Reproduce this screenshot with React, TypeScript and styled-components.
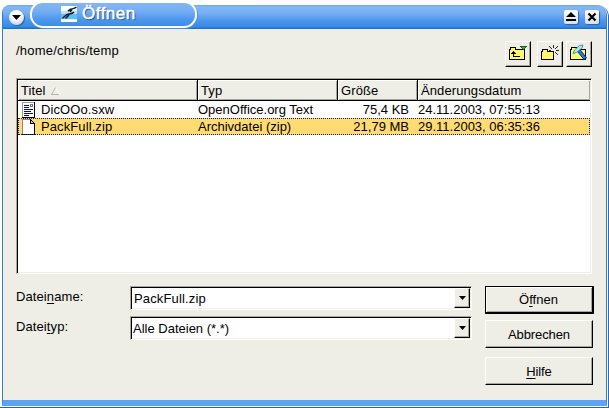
import React from 'react';
import styled, { createGlobalStyle, css } from 'styled-components';

const Global = createGlobalStyle`
  * { box-sizing: border-box; }
  body { margin: 0; background: #fff; overflow: hidden; }
  button { font: inherit; color: inherit; padding: 0; }
`;

const Desktop = styled.div`
  width: 609px;
  height: 408px;
  padding: 5px 0 0 2px;
  background: #fff;
  border-bottom: 1px solid #2c62a8;
  font: 13px/16px "Liberation Sans", Arial, sans-serif;
  color: #000;
`;

const Frame = styled.div`
  position: relative;
  width: 607px;
  height: 402px;
  display: flex;
  flex-direction: column;
  background: #fff;
  border-right: 1px solid #2e6cba;
  border-top-right-radius: 12px;
`;

const Inner = styled.main`
  width: 605px;
  height: 401px;
  display: flex;
  flex-direction: column;
  overflow: hidden;
  border-radius: 8px 11px 0 0;
  background: #eeede6;
  border-left: 1px solid #2f7fd0;
  border-right: 1px solid #2f7fd0;
  border-bottom: 6px solid #5fa3f4;
`;

const TitleBar = styled.header`
  flex: none;
  height: 24px;
  margin: 0 -1px;
  padding: 0 8px 0 7px;
  display: flex;
  align-items: center;
  background: linear-gradient(#69a7ee 0, #82b7f6 2px, #79b0f4 8px, #4b94ec 16px, #358ae9 22px, #2470c4 23px);
`;

const MenuBall = styled.button`
  width: 15px;
  height: 15px;
  border: 0;
  border-radius: 50%;
  background: radial-gradient(circle at 45% 30%, #fff 35%, #cfd5e0 75%, #a9b6ca);
  box-shadow: 1px 1px 1px #2462ac;
  display: grid;
  place-items: center;
`;

const TitleTab = styled.div`
  position: absolute;
  left: 28px;
  top: -4px;
  width: 167px;
  height: 27px;
  border: 2px solid #fff;
  border-radius: 13px;
  background: linear-gradient(#82b7f6 0, #76aef3 8px, #5098ed 16px, #3a8cea);
  display: flex;
  align-items: center;
  padding: 0 0 1px 29px;
  gap: 5px;
  box-shadow: 1px 1px 0 #4a90e4;
`;

const Title = styled.h1`
  margin: 0;
  font-size: 17px;
  line-height: 20px;
  font-weight: 400;
  letter-spacing: 0.5px;
  color: #fff;
  -webkit-text-stroke: 0.5px #fff;
  text-shadow: 1px 1px 1px #123f7a;
`;

const WindowControls = styled.div`
  margin-left: auto;
  display: flex;
  gap: 7px;
`;

const WindowButton = styled.button`
  width: 14px;
  height: 14px;
  border: 0;
  border-radius: 2px;
  background: linear-gradient(#fff, #d8dee8);
  box-shadow: 1px 1px 1px #2462ac;
  display: grid;
  place-items: center;
`;

const Toolbar = styled.div`
  display: flex;
  align-items: flex-start;
  padding: 12px 14px 0 13px;
  height: 49px;
`;

const Path = styled.div`
  flex: 1;
  margin-top: 2px;
  letter-spacing: 0.2px;
`;

const bevel = css`
  border: 1px solid;
  border-color: #fff #000 #000 #fff;
  box-shadow: inset -1px -1px 0 #a5a79d;
  background: #eeede6;
`;

const ToolButton = styled.button<{ $gap?: number }>`
  ${bevel}
  width: 26px;
  height: 26px;
  margin-left: ${(p) => p.$gap ?? 0}px;
  svg { display: block; margin: -1px; }
`;

const sunken = css`
  border: 1px solid;
  border-color: #a5a79d #fff #fff #a5a79d;
  box-shadow: inset 1px 1px 0 #000, inset -1px -1px 0 #eeede6;
  background: #fff;
  padding: 2px 1px 1px 2px;
`;

const FileList = styled.section`
  ${sunken}
  width: 576px;
  height: 196px;
  margin-left: 13px;
  padding: 1px;
`;

const columns = css`
  display: grid;
  grid-template-columns: 180px 140px 80px 1fr;
`;

const HeaderRow = styled.div`
  ${columns}
  height: 21px;
  border-bottom: 1px solid #000;
`;

const HeaderCell = styled.div<{ $last?: boolean }>`
  display: flex;
  align-items: center;
  gap: 5px;
  padding: 2px 0 0 3px;
  background: #eeede6;
  border-right: ${(p) => (p.$last ? 0 : 1)}px solid #000;
  box-shadow: inset 1px 1px 0 #fff, inset -1px -1px 0 #a5a79d;
  letter-spacing: 0.1px;
`;

const FileRow = styled.div<{ $selected?: boolean }>`
  ${columns}
  height: 17px;
  line-height: 18px;
  white-space: nowrap;
  ${(p) =>
    p.$selected &&
    css`
      background: #ffdb73;
      outline: 1px dotted #10206a;
      outline-offset: -1px;
    `}
`;

const NameCell = styled.div`
  display: flex;
  gap: 6px;
  padding-left: 4px;
  letter-spacing: 0.1px;
  svg { flex: none; margin-top: 1px; }
`;

const Cell = styled.div<{ $right?: boolean }>`
  text-align: ${(p) => (p.$right ? 'right' : 'left')};
  padding: 0 ${(p) => (p.$right ? 9 : 0)}px 0 0;
`;

const Form = styled.div`
  display: flex;
  padding: 12px 0 0 13px;
`;

const Fields = styled.div`
  width: 469px;
  display: flex;
  flex-direction: column;
  gap: 6px;
`;

const Field = styled.div`
  display: flex;
  height: 24px;
`;

const Label = styled.label`
  width: 114px;
  padding-top: 3px;
  letter-spacing: 0.1px;
`;

const Combo = styled.div`
  ${sunken}
  width: 342px;
  height: 24px;
  display: flex;
`;

const ComboText = styled.span<{ $indent: number; $spacing?: number }>`
  flex: 1;
  padding: 2px 0 0 ${(p) => p.$indent}px;
  letter-spacing: ${(p) => p.$spacing ?? 0}px;
`;

const DropButton = styled.button`
  ${bevel}
  width: 16px;
  height: 20px;
  margin-top: -1px;
  display: grid;
  place-items: center;
`;

const Actions = styled.div`
  display: flex;
  flex-direction: column;
`;

const ActionButton = styled.button<{ $primary?: boolean; $after?: number }>`
  ${bevel}
  width: 108px;
  height: 28px;
  margin-bottom: ${(p) => p.$after ?? 0}px;
  padding-top: 1px;
  letter-spacing: ${(p) => (p.$primary ? 0 : -0.1)}px;
  ${(p) =>
    p.$primary &&
    css`
      width: 109px;
      border: 1px solid #000;
      border-width: 1px 2px 2px 1px;
      padding-right: 1px;
      box-shadow: inset 1px 1px 0 #fff, inset -1px -1px 0 #a5a79d;
    `}
`;

const Key = styled.span`
  text-decoration: underline;
  text-underline-offset: 2px;
  text-decoration-skip-ink: none;
`;

const DownArrow = ({ width = 7 }: { width?: number }) => (
  <svg width={width} height={width > 7 ? 5 : 4} viewBox="0 0 7 4" preserveAspectRatio="none">
    <path d="M0 0h7L3.5 4z" />
  </svg>
);

const BirdsIcon = () => (
  <svg width="16" height="16" viewBox="0 0 16 16">
    <path fill="#fff" d="M0 0h16v16H0z" />
    <path fill="#b4e6fb" d="M0 5h16v3H0z" />
    <path fill="#5cc0f4" d="M0 8h16v5H0z" />
    <path fill="#d8f1fd" d="M0 13h16v1H0z" />
    <path
      d="M15.500 1C13 3.200 11.500 2.600 9.500 3.200L7 5.200M11 3.500L9 6M13 6C11 8.500 8 7.600 5.500 8.800L1.500 12.200M8 9L4.500 12.500"
      fill="none"
      stroke="#101820"
      strokeWidth="1.500"
    />
  </svg>
);

const Folder = ({ x, y, w, h }: { x: number; y: number; w: number; h: number }) => (
  <path
    d={`M${x + 0.5} ${y + h - 0.5}v-${h - 3}h1v-2h5v2h${w - 7}v${h - 3}z`}
    fill="#fff96e"
    stroke="#000"
  />
);

const UpIcon = () => (
  <svg width="26" height="26" viewBox="0 0 26 26" shapeRendering="crispEdges">
    <Folder x={4} y={6} w={16} h={13} />
    <path d="M8 10h1v5h6v1H8zM7 11h3v1H7zM6 12h5v1H6z" />
    <path d="M15 5h7v1h-1v1h-1v1h-1v1h-1V8h-1V7h-1V6h-1z" fill="#086b20" />
    <path d="M17 6h3v1h-1v1h-1V7h-1z" fill="#18c040" />
  </svg>
);

const NewFolderIcon = () => (
  <svg width="26" height="26" viewBox="0 0 26 26" shapeRendering="crispEdges">
    <Folder x={4} y={8} w={13} h={11} />
    <path
      d="M16 4h1v3h-1zM16 11h1v3h-1zM12 9h2v1h-2zM19 9h3v1h-3zM12 5h1v1h-1zM13 6h1v1h-1zM20 5h1v1h-1zM19 6h1v1h-1zM14 7h1v1h-1zM18 7h1v1h-1zM18 11h1v1h-1zM19 12h1v1h-1zM20 13h1v1h-1z"
      fill="#222"
    />
  </svg>
);

const BrushIcon = () => (
  <svg width="26" height="26" viewBox="0 0 26 26">
    <g shapeRendering="crispEdges">
      <Folder x={4} y={6} w={16} h={13} />
    </g>
    <path d="M11.500 10.500l2.500-2 6.500 8.500-2.500 1.500z" fill="#2876d8" stroke="#0a2d78" />
    <path d="M7 12.500l1.500-3.500 5-4.500 3.500-.5-1 3-5.500 4.500z" fill="#a8e8f0" stroke="#27809b" strokeWidth=".8" />
  </svg>
);

const DocIcon = ({ text }: { text?: boolean }) => (
  <svg width="13" height="16" viewBox="0 0 13 16" shapeRendering="crispEdges">
    {text ? (
      <>
        <path d="M0 0h13v16H0z" fill="#000" />
        <path d="M0 0h12v15H0z" fill="#999" />
        <path d="M1 1h11v14H1z" fill="#fff" />
        <path
          d="M2 3h5v1H2zM2 5h5v1H2zM2 7h9v1H2zM2 9h7v1H2zM2 11h9v1H2zM2 13h5v1H2z"
          fill="#0000c8"
        />
        <path d="M8 2h3v3H8z" fill="#777" />
        <path d="M9 3h1v1H9z" fill="#fff" />
      </>
    ) : (
      <>
        <path d="M0 0h8l5 5v11H0z" fill="#000" />
        <path d="M0 0h8v1H1v14H0z" fill="#888" />
        <path d="M1 1h7v4h4v10H1z" fill="#fff" />
        <path d="M9 2l2 2H9z" fill="#ccc" />
      </>
    )}
  </svg>
);

export default function App() {
  return (
    <Desktop>
      <Global />
      <Frame>
        <Inner>
          <TitleBar>
            <MenuBall aria-label="Menü">
              <DownArrow width={9} />
            </MenuBall>
            <WindowControls>
              <WindowButton aria-label="Maximieren">
                <svg width="10" height="10" viewBox="0 0 10 10">
                  <path d="M5 0l5 5H0zM0 7h10v2H0z" />
                </svg>
              </WindowButton>
              <WindowButton aria-label="Schließen">
                <svg width="10" height="10" viewBox="0 0 10 10">
                  <path d="M1.5 1.5l7 7M8.5 1.5l-7 7" stroke="#000" strokeWidth="2.2" />
                </svg>
              </WindowButton>
            </WindowControls>
          </TitleBar>
          <Toolbar>
            <Path>/home/chris/temp</Path>
            <ToolButton aria-label="Übergeordneter Ordner"><UpIcon /></ToolButton>
            <ToolButton $gap={6} aria-label="Neuer Ordner"><NewFolderIcon /></ToolButton>
            <ToolButton $gap={3} aria-label="Standardordner"><BrushIcon /></ToolButton>
          </Toolbar>
          <FileList>
            <HeaderRow>
              <HeaderCell>
                Titel
                <svg width="9" height="8" viewBox="0 0 9 8">
                  <path d="M4.5.5l4 7h-8" fill="none" stroke="#fff" />
                  <path d="M.5 7.5L4.5.5M0 7.500h8" stroke="#b5b6ae" />
                </svg>
              </HeaderCell>
              <HeaderCell>Typ</HeaderCell>
              <HeaderCell>Größe</HeaderCell>
              <HeaderCell $last>Änderungsdatum</HeaderCell>
            </HeaderRow>
            <FileRow>
              <NameCell><DocIcon text />DicOOo.sxw</NameCell>
              <Cell>OpenOffice.org Text</Cell>
              <Cell $right>75,4 KB</Cell>
              <Cell>24.11.2003, 07:55:13</Cell>
            </FileRow>
            <FileRow $selected>
              <NameCell><DocIcon />PackFull.zip</NameCell>
              <Cell>Archivdatei (zip)</Cell>
              <Cell $right>21,79 MB</Cell>
              <Cell>29.11.2003, 06:35:36</Cell>
            </FileRow>
          </FileList>
          <Form>
            <Fields>
              <Field>
                <Label>Datei<Key>n</Key>ame:</Label>
                <Combo>
                  <ComboText $indent={1} $spacing={0.15}>PackFull.zip</ComboText>
                  <DropButton aria-label="Auswahl"><DownArrow /></DropButton>
                </Combo>
              </Field>
              <Field>
                <Label>Datei<Key>t</Key>yp:</Label>
                <Combo>
                  <ComboText $indent={0}>Alle Dateien (*.*)</ComboText>
                  <DropButton aria-label="Auswahl"><DownArrow /></DropButton>
                </Combo>
              </Field>
            </Fields>
            <Actions>
              <ActionButton $primary $after={6}>Ö<Key>f</Key>fnen</ActionButton>
              <ActionButton $after={9}>Abbrechen</ActionButton>
              <ActionButton><Key>H</Key>ilfe</ActionButton>
            </Actions>
          </Form>
        </Inner>
        <TitleTab>
          <BirdsIcon />
          <Title>Öffnen</Title>
        </TitleTab>
      </Frame>
    </Desktop>
  );
}
